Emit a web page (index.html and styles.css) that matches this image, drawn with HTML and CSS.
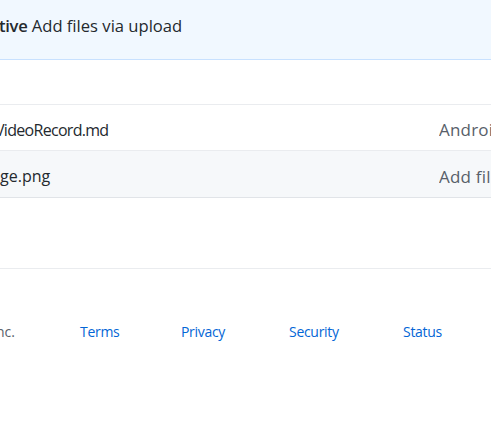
FILE: index.html
```html
<!DOCTYPE html>
<html>
<head>
<meta charset="utf-8">
<link rel="stylesheet" href="styles.css">
</head>
<body>
<div class="page">
  <div class="commit-bar">
    <span class="author">tive</span> Add files via upload
  </div>
  <div class="spacer"></div>
  <div class="files">
    <div class="file-row">
      <span class="name name-video">VideoRecord.md</span>
      <span class="msg">Android VideoRecord</span>
    </div>
    <div class="file-row alt">
      <span class="name">ge.png</span>
      <span class="msg">Add files via upload</span>
    </div>
  </div>
  <div class="gap"></div>
  <footer class="footer">
    <span class="copy">nc.</span>
    <a class="link link-terms" href="#">Terms</a>
    <a class="link link-privacy" href="#">Privacy</a>
    <a class="link link-security" href="#">Security</a>
    <a class="link link-status" href="#">Status</a>
  </footer>
</div>
</body>
</html>
```
FILE: styles.css
```css
html, body {
  margin: 0;
  padding: 0;
  overflow: hidden;
  background: #fff;
}
body {
  font-family: "Open Sans", "Noto Sans", sans-serif;
  color: #24292e;
  width: 491px;
  height: 430px;
}
.page {
  width: 491px;
}
.commit-bar {
  height: 59px;
  background: #f1f8ff;
  border-bottom: 1px solid #c8e1ff;
  font-size: 16.6px;
  line-height: 52px;
  white-space: nowrap;
  overflow: hidden;
  margin-left: -1px;
}
.author {
  font-weight: 600;
  letter-spacing: -0.3px;
}
.spacer {
  height: 44px;
  border-bottom: 1px solid #eaecef;
}
.file-row {
  display: flex;
  justify-content: space-between;
  align-items: center;
  box-sizing: border-box;
  height: 46px;
  padding-top: 4px;
  border-bottom: 1px solid #eaecef;
  font-size: 16px;
  white-space: nowrap;
  overflow: hidden;
}
.file-row.alt {
  background: #f6f8fa;
  height: 47px;
  border-bottom-color: #e1e4e8;
}
.name-video {
  margin-left: -5px;
  letter-spacing: -0.7px;
}
.msg {
  color: #586069;
  flex: none;
  width: 52px;
  overflow: hidden;
  font-size: 17px;
  letter-spacing: 0.2px;
}
.gap {
  height: 70px;
  border-bottom: 1px solid #eaecef;
}
.footer {
  display: flex;
  align-items: center;
  height: 124px;
  font-size: 14px;
  white-space: nowrap;
}
.copy {
  color: #586069;
  margin-left: -4px;
  width: 84px;
}
.link {
  color: #0366d6;
  text-decoration: none;
  letter-spacing: -0.3px;
}
.link-terms { width: 101px; }
.link-privacy { width: 108px; }
.link-security { width: 114px; }
```
